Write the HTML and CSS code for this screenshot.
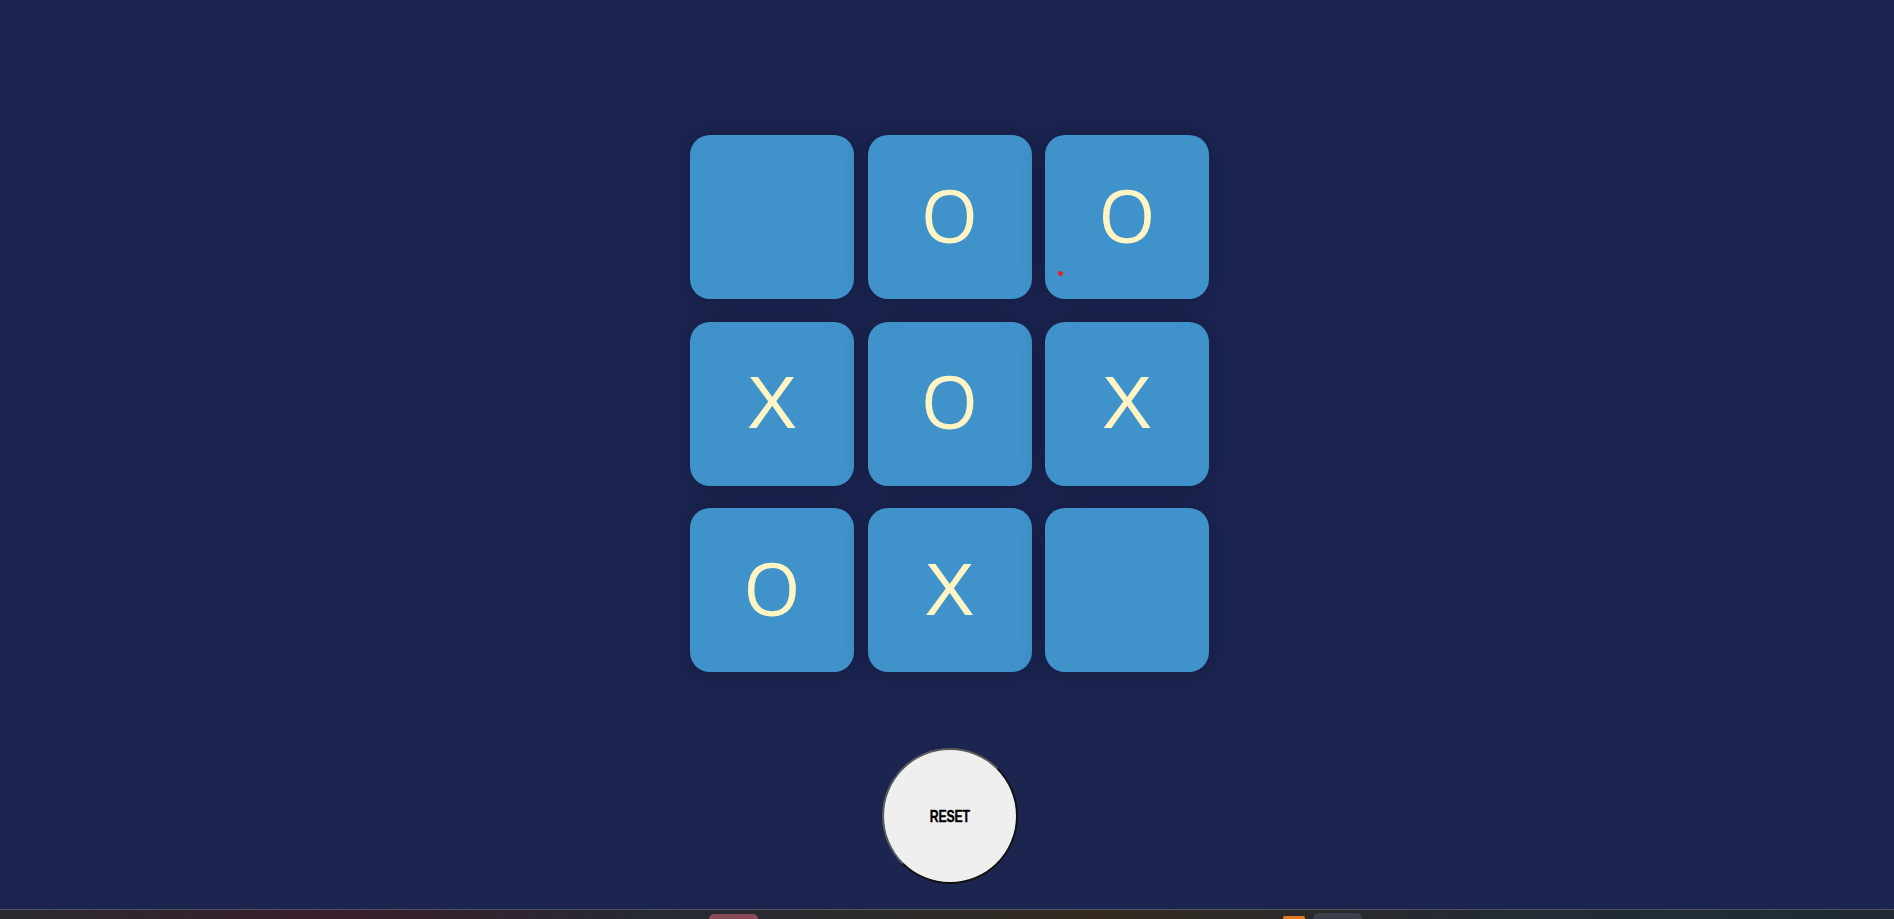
FILE: index.html
```html
<!DOCTYPE html>
<html lang="en">
<head>
<meta charset="utf-8">
<title>Tic Tac Toe</title>
<link rel="stylesheet" href="styles.css">
</head>
<body>
<main class="game">
  <div class="board">
    <div class="cell"></div>
    <div class="cell mark-o">O</div>
    <div class="cell mark-o">O<span class="dot"></span></div>
    <div class="cell mark-x">X</div>
    <div class="cell mark-o">O</div>
    <div class="cell mark-x">X</div>
    <div class="cell mark-o">O</div>
    <div class="cell mark-x">X</div>
    <div class="cell"></div>
  </div>
  <button class="reset" type="button"><span class="reset-label">RESET</span></button>
</main>
<footer class="taskbar">
  <span class="tb-item tb-pink"></span>
  <span class="tb-item tb-orange"></span>
  <span class="tb-item tb-gray"></span>
</footer>
</body>
</html>
```
FILE: styles.css
```css
html, body {
  margin: 0;
  padding: 0;
}
body {
  background: #1b2550;
  height: 100vh;
  overflow: hidden;
  display: flex;
  flex-direction: column;
  font-family: "Open Sans", "Liberation Sans", sans-serif;
}
.game {
  flex: 1;
  display: flex;
  flex-direction: column;
  align-items: center;
  padding-top: 135px;
  padding-left: 5px;
}
.board {
  display: grid;
  grid-template-columns: repeat(3, 164px);
  grid-auto-rows: 164px;
  column-gap: 13.5px;
  row-gap: 22.5px;
}
.cell {
  position: relative;
  background: #3f92ca;
  border-radius: 20px;
  box-shadow: 0 0 22px rgba(10, 15, 40, 0.35);
  color: #fff5c4;
  line-height: 1;
  display: flex;
  align-items: center;
  justify-content: center;
  box-sizing: border-box;
}
.mark-o {
  font-family: "Open Sans", sans-serif;
  font-size: 73px;
  padding-bottom: 6px;
}
.mark-x {
  font-family: "Liberation Sans", "Arial", sans-serif;
  font-size: 75px;
  padding-bottom: 2px;
}
.dot {
  position: absolute;
  left: 13px;
  top: 136px;
  width: 5px;
  height: 5px;
  border-radius: 50%;
  background: #e8202a;
}
.reset {
  margin-top: 76px;
  width: 136px;
  height: 136px;
  border-radius: 50%;
  border: 2px solid;
  border-color: #5a5a5a #111 #111 #5a5a5a;
  background: #efefef;
  color: #000;
  padding: 0;
  display: flex;
  align-items: center;
  justify-content: center;
}
.reset-label {
  display: inline-block;
  font-family: "Liberation Sans", sans-serif;
  font-weight: bold;
  font-size: 17px;
  letter-spacing: -0.2px;
  transform: scaleX(0.72);
  -webkit-text-stroke: 0.4px #000;
  margin-top: 2px;
}
.taskbar {
  height: 9px;
  border-top: 1px solid #55585e;
  background: linear-gradient(90deg, #2a2930 0%, #3a1f2c 18%, #252a33 35%, #2e2a27 50%, #33291f 58%, #262a30 75%, #1f2c38 92%, #222a33 100%);
  position: relative;
}
.tb-item {
  position: absolute;
  top: 4px;
  height: 6px;
  border-radius: 5px 5px 0 0;
}
.tb-pink {
  left: 709px;
  width: 49px;
  background: #8a4a58;
}
.tb-orange {
  left: 1283px;
  width: 22px;
  top: 6px;
  background: #e07a20;
  border-radius: 2px 2px 0 0;
}
.tb-gray {
  left: 1313px;
  width: 49px;
  top: 3px;
  background: #3a414c;
}
```
